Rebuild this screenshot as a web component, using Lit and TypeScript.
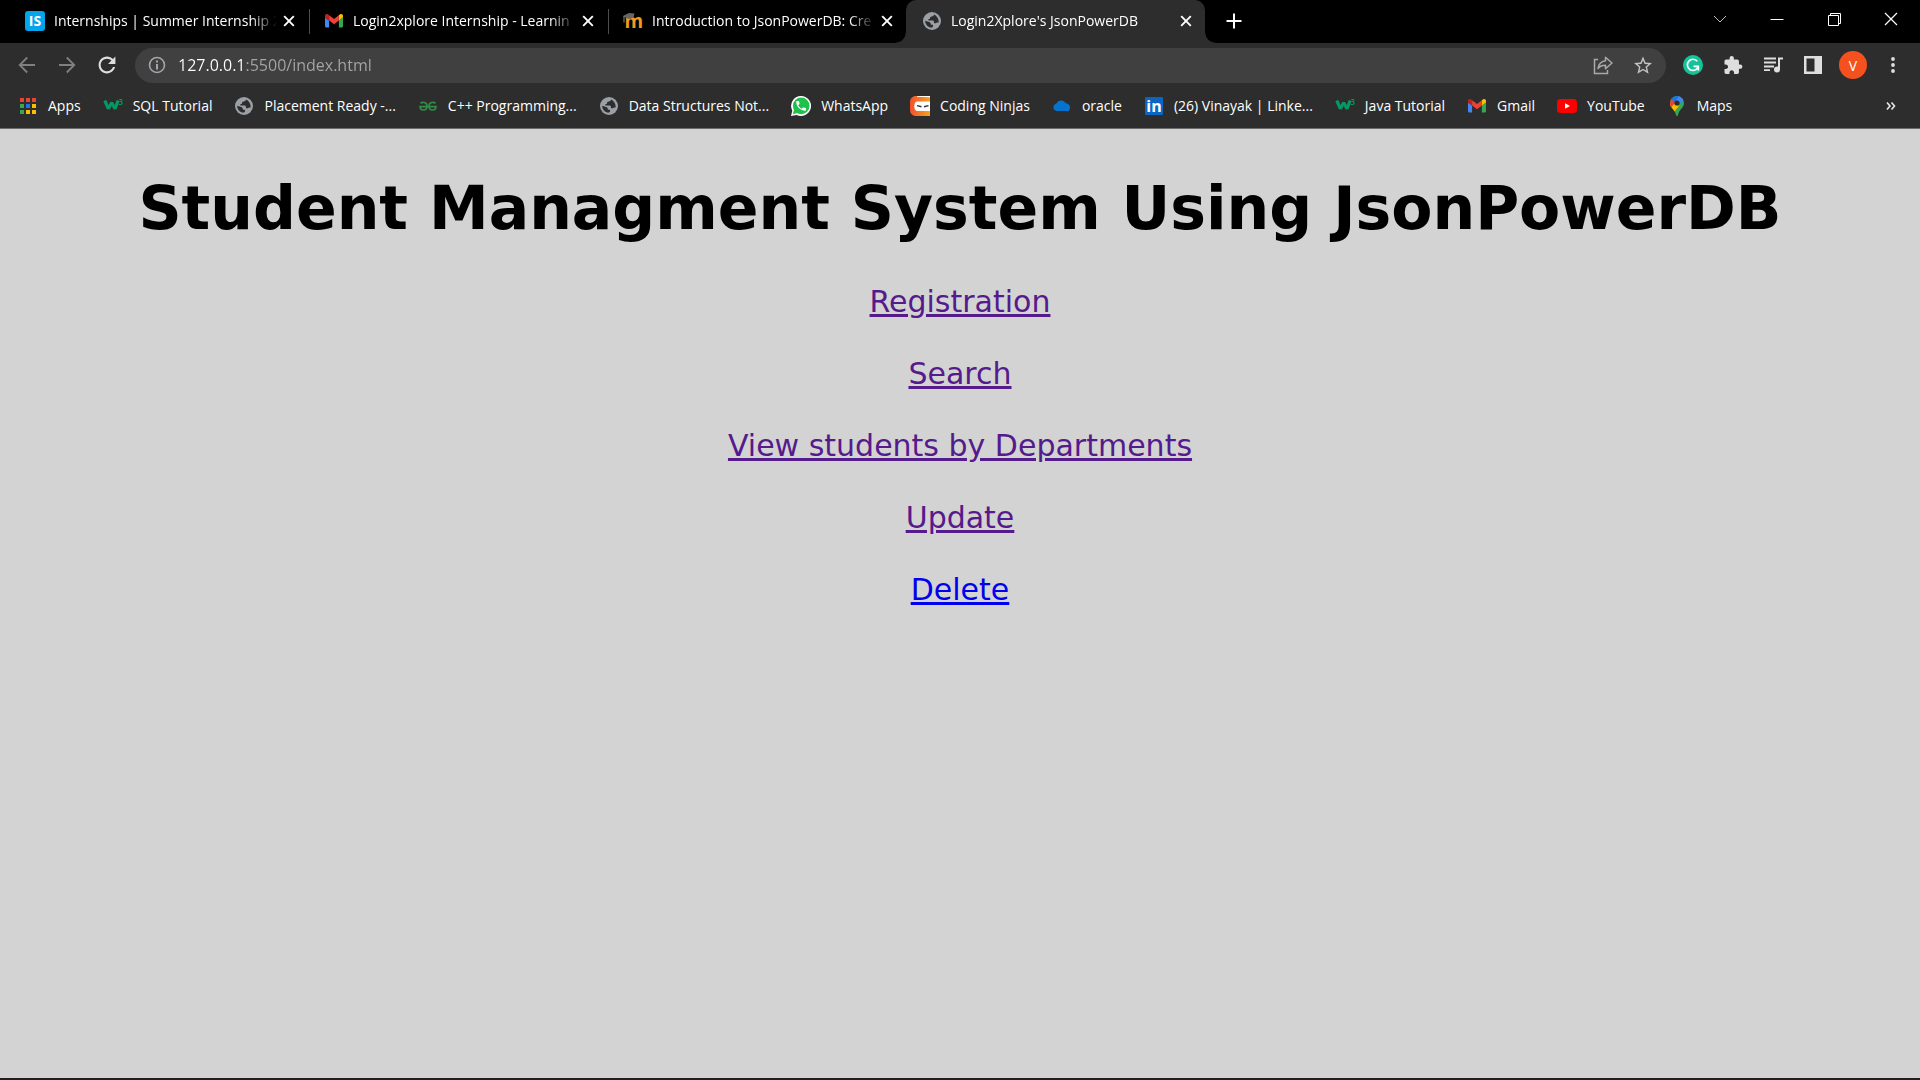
import { LitElement, html, svg, css, SVGTemplateResult } from "lit";
import { customElement, property } from "lit/decorators.js";

const gmail = svg`<g transform="translate(1 3) scale(.2045) translate(-52 -42)">
  <path fill="#4285f4" d="M58 108h14V74L52 59v43c0 3.32 2.69 6 6 6"/>
  <path fill="#34a853" d="M120 108h14c3.32 0 6-2.69 6-6V59l-20 15"/>
  <path fill="#fbbc04" d="M120 48v26l20-15v-8c0-7.42-8.47-11.65-14.4-7.2"/>
  <path fill="#ea4335" d="M72 74V48l24 18 24-18v26L96 92"/>
  <path fill="#c5221f" d="M52 51v8l20 15V48l-5.6-4.2c-5.94-4.45-14.4-.22-14.4 7.2"/></g>`;

const globe = svg`<circle cx="10" cy="10" r="9" fill="#9aa0a6"/>
  <path fill="#2d2d2d" d="M12 3.600c-.2 1.300-1 1.800-2.200 1.900-1.300.1-1.700.6-1.700 1.400 0 .8-.7 1.200-1.700 1.200v1.500h3.800c1.300 0 1.800.6 1.800 1.700v.9h1.500c1 0 1.500-.6 2.400-.6h.8c.3-3.600-1.800-6.700-4.700-8z"/>
  <path fill="#2d2d2d" d="M3.200 9.700l3.900 1.200c1.200.4 1.600 1 1.600 1.800 0 .8.500 1.100 1.400 1.100.8 0 1 .5 1 1.100 0 .8-.6 1.200-1.400 1.300v.5c-3.700-.2-6.600-3.300-6.500-7z"/>`;

const w3 = svg`<polyline points="1.800,4.500 5.300,12.700 8.700,6.800 12,12.700 15.200,4.500" fill="none" stroke="#059862" stroke-width="3.200" stroke-linejoin="bevel"/>
  <text x="15.500" y="9" font-size="8" fill="#059862" font-family="Open Sans" font-weight="600">3</text>`;

const icons: Record<string, SVGTemplateResult> = {
  gmail,
  globe,
  w3,
  is: svg`<rect width="20" height="20" rx="3" fill="#00a5ec"/>
    <text x="10" y="15" text-anchor="middle" font-size="14" font-weight="700" fill="#fff" font-family="Open Sans">IS</text>`,
  moodle: svg`<text x="1.500" y="17" font-size="19" font-weight="700" fill="#f7981d" font-family="Open Sans">m</text>
    <path fill="#666" d="M0 5 6 2l5.500.5-1 4-4 1.500-3-1z"/><path d="M1 5v6.500" stroke="#888" stroke-width="1"/>`,
  apps: svg`<path fill="#ea4335" d="M2 2h4v4H2zM8 2h4v4H8zM14 2h4v4h-4z"/><path fill="#34a853" d="M2 8h4v4H2zM2 14h4v4H2z"/>
    <path fill="#1a73e8" d="M8 8h4v4H8z"/><path fill="#fbbc04" d="M14 8h4v4h-4zM14 14h4v4h-4zM8 14h4v4H8z"/>`,
  gfg: svg`<g fill="none" stroke="#2f8d46" stroke-width="1.700"><path d="M2.500 7.300C4 5.800 9 5.700 9 10.200c0 2.300-1.500 3.800-3.500 3.800S2 12.500 2 10.600h16c0 1.900-1.500 3.400-3.500 3.400S11 12.500 11 10.200c0-4.500 5-4.400 6.500-2.900"/></g>`,
  whatsapp: svg`<path fill="#fff" d="M10 0a10 10 0 1 1-4.500 18.900L0 20l1.300-5.200A10 10 0 0 1 10 0z"/>
    <circle cx="10.200" cy="9.900" r="8.300" fill="#1fc04b"/><path fill="#1fc04b" d="M1.900 18.200l1.200-4.700 3.500 3.500z"/>
    <path fill="#fff" transform="translate(3.600 3.400) scale(.54)" d="M6.620 10.790c1.440 2.830 3.760 5.140 6.590 6.590l2.200-2.200c.27-.27.67-.36 1.020-.24 1.120.37 2.330.57 3.570.57.55 0 1 .45 1 1V20c0 .55-.45 1-1 1-9.390 0-17-7.610-17-17 0-.55.45-1 1-1h3.500c.55 0 1 .45 1 1 0 1.250.2 2.450.57 3.570.11.35.03.74-.25 1.020l-2.200 2.200z"/>`,
  ninjas: svg`<defs><linearGradient id="nj"><stop offset="0" stop-color="#f1502f"/><stop offset="1" stop-color="#f7a11b"/></linearGradient></defs>
    <path fill="url(#nj)" d="M6 0h14v20H6c-3.500 0-6-2.500-6-6V6c0-3.500 2.500-6 6-6z"/><path fill="#fff" d="M7 0h13v1.200L7 .8z"/>
    <path fill="#fff" d="M7.500 5.500H20v9.500H7.500C5.500 15 4.300 13 4.300 10.200S5.500 5.500 7.500 5.500z"/>
    <path d="M7 9.600l4.500 1.200M18.500 9.600L14 10.800" stroke="#333" stroke-width="1.500"/>`,
  oracle: svg`<path fill="#0572ce" d="M4.800 15a3.700 3.700 0 0 1-.5-7.300 5.500 5.500 0 0 1 9.700-.5 4.500 4.500 0 0 1 3 7.500c-.5.200-1 .3-1.600.3z"/>`,
  linkedin: svg`<rect x="1" y="1" width="18" height="18" rx="1" fill="#0a66c2"/>
    <text x="10" y="16" text-anchor="middle" font-size="16" font-weight="700" fill="#fff" font-family="Open Sans">in</text>`,
  youtube: svg`<rect y="3" width="20" height="14" rx="3.500" fill="#f00"/><path fill="#fff" d="M8 7.200v5.600l5-2.800z"/>`,
  maps: svg`<defs><clipPath id="pin"><path d="M10 0a7 7 0 0 1 7 7c0 5-5 6.500-6 12-.2 1.200-1.800 1.200-2 0C8 13.500 3 12 3 7a7 7 0 0 1 7-7z"/></clipPath></defs>
    <g clip-path="url(#pin)"><path fill="#34a853" d="M0 0h20v20H0z"/><path fill="#fbbc04" d="M1 8.500l5-3 6.500 4L6 17z"/><path fill="#ea4335" d="M0 2h4.500L9 6l-5.500 6L0 10z"/>
    <path fill="#1a73e8" d="M3.500 3 10-1l3 1-4.500 6z"/><path fill="#4285f4" d="M12 0l5 3.500-6 6.500-2.500-5z"/></g><circle cx="10" cy="7" r="2.600" fill="#2d2d2d"/>`,
  close: svg`<path d="M5.200 5.200l9.600 9.600M14.800 5.200l-9.600 9.600" stroke="#fff" stroke-width="1.900"/>`,
  plus: svg`<path d="M10 2.500v15M2.500 10h15" stroke="#fff" stroke-width="2"/>`,
  chevron: svg`<path d="M4 7l6 6 6-6" fill="none" stroke="#bbb" stroke-width="1"/>`,
  minimise: svg`<path d="M3.500 10.500h13" stroke="#fff"/>`,
  restore: svg`<path d="M4.500 6.500h10v10h-10zM6.500 6.500v-2h10v10h-2" fill="none" stroke="#fff"/>`,
  shut: svg`<path d="M4 4l12 12M16 4L4 16" stroke="#fff" stroke-width="1.200"/>`,
  back: svg`<path d="M18 10H3M10.200 2.500 2.700 10l7.500 7.500" fill="none" stroke="#808080" stroke-width="1.800"/>`,
  forward: svg`<path d="M2 10h15M9.800 2.500l7.500 7.500-7.500 7.500" fill="none" stroke="#808080" stroke-width="1.800"/>`,
  reload: svg`<path transform="translate(-2.600 -2.600) scale(1.050)" fill="#dedede" d="M17.650 6.350C16.200 4.900 14.210 4 12 4c-4.420 0-7.990 3.580-7.990 8s3.570 8 7.990 8c3.730 0 6.840-2.550 7.730-6h-2.080c-.82 2.330-3.040 4-5.650 4-3.310 0-6-2.690-6-6s2.690-6 6-6c1.660 0 3.140.69 4.220 1.780L13 11h7V4l-2.350 2.350z"/>`,
  info: svg`<circle cx="10" cy="10" r="7.500" fill="none" stroke="#a3a7ab" stroke-width="1.600"/><path d="M10 5.500v2M10 9v5.500" stroke="#a3a7ab" stroke-width="2"/>`,
  share: svg`<path d="M5 4.500H1.500v14h13V15" fill="none" stroke="#a9a9a9" stroke-width="1.500"/>
    <path d="M12.500 2.300 19 8l-6.500 5.700v-3.400c-3.500 0-5.800 1-7.500 3.200.5-4.300 3-7.100 7.500-7.800z" fill="none" stroke="#a9a9a9" stroke-width="1.500" stroke-linejoin="round"/>`,
  star: svg`<path transform="translate(-.8 -.2) scale(.9)" fill="#c2c2c2" d="M22 9.240l-7.190-.62L12 2 9.190 8.630 2 9.240l5.460 4.730L5.820 21 12 17.270 18.180 21l-1.630-7.030L22 9.240zM12 15.400l-3.760 2.270 1-4.280-3.320-2.880 4.380-.38L12 6.100l1.710 4.040 4.380.38-3.320 2.880 1 4.280L12 15.400z"/>`,
  grammarly: svg`<circle cx="10" cy="10" r="10" fill="#15c39a"/>
    <path d="M14.300 6.300A5.600 5.600 0 1 0 15 12.300" fill="none" stroke="#fff" stroke-width="1.700"/><path d="M10.500 11.300h4.800v4.200" fill="none" stroke="#fff" stroke-width="1.700"/>`,
  puzzle: svg`<path transform="translate(-.2 .2) scale(.85)" fill="#dedede" d="M20.500 11H19V7c0-1.100-.9-2-2-2h-4V3.500C13 2.120 11.880 1 10.500 1S8 2.120 8 3.500V5H4c-1.100 0-1.990.9-1.990 2v3.800H3.500c1.490 0 2.700 1.210 2.700 2.700s-1.210 2.700-2.700 2.700H2V20c0 1.100.9 2 2 2h3.800v-1.500c0-1.490 1.210-2.700 2.700-2.700 1.490 0 2.700 1.210 2.700 2.700V22H17c1.100 0 2-.9 2-2v-4h1.500c1.380 0 2.500-1.120 2.500-2.500S21.880 11 20.500 11z"/>`,
  music: svg`<path d="M1 3.500h12M1 7.500h12M1 11.500h10M1 15.200h6" stroke="#dedede" stroke-width="1.800"/>
    <path d="M16 14.500V3.500h4" fill="none" stroke="#dedede" stroke-width="2"/><circle cx="14" cy="14.500" r="3" fill="#dedede"/>`,
  panel: svg`<path fill-rule="evenodd" fill="#dedede" d="M1 1h18v18H1zM3.500 3.500v13h8v-13z"/>`,
  dots: svg`<circle cx="10" cy="4" r="1.900" fill="#dedede"/><circle cx="10" cy="10" r="1.900" fill="#dedede"/><circle cx="10" cy="16" r="1.900" fill="#dedede"/>`,
  more: svg`<path d="M6 6.500 9 10l-3 3.500M10.500 6.500l3 3.500-3 3.500" fill="none" stroke="#e8e8e8" stroke-width="1.600"/>`,
};

const icon = (name: string) =>
  html`<svg class="icon" width="20" height="20" viewBox="0 0 20 20" aria-hidden="true">${icons[name]}</svg>`;

const shared = css`
  :host { box-sizing: border-box; font-family: "Open Sans", "Noto Sans", sans-serif; }
  .icon { display: block; flex: none; }
  button {
    display: flex; align-items: center; justify-content: center;
    padding: 0; border: 0; background: none; color: inherit; font: inherit;
  }
`;

@customElement("tab-strip")
export class TabStrip extends LitElement {
  @property({ attribute: false }) tabs: { icon: string; title: string; active?: boolean }[] = [
    { icon: "is", title: "Internships | Summer Internship 2" },
    { icon: "gmail", title: "Login2xplore Internship - Learnin" },
    { icon: "moodle", title: "Introduction to JsonPowerDB: Cre" },
    { icon: "globe", title: "Login2Xplore's JsonPowerDB", active: true },
  ];

  static styles = [shared, css`
    :host {
      display: flex; height: 43px; padding: 0 1px 0 9px; background: #000; color: #fff; font-size: 14px;
    }
    .tabs { display: flex; flex: 0 1 1196px; min-width: 0; }
    .tab {
      display: flex; flex: 1 1 0; min-width: 0; align-items: center;
      padding: 0 9px 1px 16px; box-sizing: border-box; position: relative;
    }
    .tab.divided::after {
      content: ""; position: absolute; right: -2px; top: 9px; width: 1px; height: 25px; background: #4d4d4d;
    }
    .tab.active { background: #2d2d2d; border-radius: 10px 10px 0 0; }
    .tab.active::before, .tab.active::after {
      content: ""; position: absolute; bottom: 0; width: 10px; height: 10px;
    }
    .tab.active::before { right: 100%; background: radial-gradient(circle at 0 0, #000 9px, #2d2d2d 10px); }
    .tab.active::after { left: 100%; background: radial-gradient(circle at 100% 0, #000 9px, #2d2d2d 10px); }
    .select { flex: 1; min-width: 0; gap: 9px; justify-content: flex-start; line-height: 20px; }
    .title {
      flex: 1; min-width: 0; overflow: hidden; white-space: nowrap; text-align: left;
      mask-image: linear-gradient(to right, #000 calc(100% - 28px), transparent calc(100% - 2px));
    }
    .close { width: 20px; height: 20px; }
    .new { width: 36px; height: 42px; margin-left: 11px; }
    .controls { display: flex; margin-left: auto; height: 37px; }
    .controls button { width: 57px; }
  `];

  render() {
    return html`
      <div class="tabs">
        ${this.tabs.map((t, i) => html`
          <div class="tab ${t.active ? "active" : i < 2 ? "divided" : ""}">
            <button class="select">${icon(t.icon)}<span class="title">${t.title}</span></button>
            <button class="close" aria-label="Close tab">${icon("close")}</button>
          </div>`)}
      </div>
      <button class="new" aria-label="New tab">${icon("plus")}</button>
      <div class="controls">
        <button aria-label="Search tabs">${icon("chevron")}</button>
        <button aria-label="Minimise">${icon("minimise")}</button>
        <button aria-label="Restore">${icon("restore")}</button>
        <button aria-label="Close">${icon("shut")}</button>
      </div>`;
  }
}

@customElement("tool-bar")
export class ToolBar extends LitElement {
  static styles = [shared, css`
    :host {
      display: flex; align-items: center; height: 45px; padding: 0 7px 1px;
      background: #2d2d2d; color: #fff;
    }
    .tool { width: 40px; height: 36px; flex: none; }
    .omnibox {
      display: flex; align-items: center; flex: 1; min-width: 0; height: 35px; margin: 0 7px 0 8px;
      padding: 0 3px 0 12px; border-radius: 18px; background: #404040; box-sizing: border-box;
    }
    .url {
      flex: 1; min-width: 0; margin: 0; padding: 0 0 0 11px; border: 0; outline: 0; height: 24px;
      font: 16px/24px "Open Sans", "Noto Sans", sans-serif; color: transparent;
      background: linear-gradient(to right, #fff 68px, #a6a6a6 68px) content-box;
      -webkit-background-clip: text; background-clip: text;
      background-origin: content-box;
    }
    .avatar {
      display: flex; align-items: center; justify-content: center; width: 28px; height: 28px;
      border-radius: 50%; background: #f4511e; font-size: 14px;
    }
  `];

  tool(name: string, label: string) {
    return html`<button class="tool" aria-label=${label}>${icon(name)}</button>`;
  }

  render() {
    return html`
      ${this.tool("back", "Back")}${this.tool("forward", "Forward")}${this.tool("reload", "Reload")}
      <div class="omnibox">
        ${icon("info")}
        <input class="url" aria-label="Address" spellcheck="false" value="127.0.0.1:5500/index.html" />
        ${this.tool("share", "Share")}${this.tool("star", "Bookmark this page")}
      </div>
      ${this.tool("grammarly", "Grammarly")}${this.tool("puzzle", "Extensions")}
      ${this.tool("music", "Media")}${this.tool("panel", "Side panel")}
      <button class="tool" aria-label="Profile"><span class="avatar">V</span></button>
      ${this.tool("dots", "Menu")}`;
  }
}

@customElement("bookmark-bar")
export class BookmarkBar extends LitElement {
  @property({ attribute: false }) items: [string, string][] = [
    ["apps", "Apps"], ["w3", "SQL Tutorial"], ["globe", "Placement Ready -..."], ["gfg", "C++ Programming..."],
    ["globe", "Data Structures Not..."], ["whatsapp", "WhatsApp"], ["ninjas", "Coding Ninjas"], ["oracle", "oracle"],
    ["linkedin", "(26) Vinayak | Linke..."], ["w3", "Java Tutorial"], ["gmail", "Gmail"], ["youtube", "YouTube"],
    ["maps", "Maps"],
  ];

  static styles = [shared, css`
    :host {
      display: flex; align-items: center; height: 41px; padding: 0 19px 4px 18px; gap: 22px;
      border-bottom: 1px solid #6b6b6b; background: #2d2d2d; font-size: 14px; line-height: 20px;
    }
    .item { display: flex; align-items: center; gap: 10px; color: #fff; text-decoration: none; white-space: nowrap; }
    .more { margin-left: auto; }
  `];

  render() {
    return html`
      ${this.items.map(([name, label]) => html`<a class="item" href="#">${icon(name)}<span>${label}</span></a>`)}
      <button class="more" aria-label="More bookmarks">${icon("more")}</button>`;
  }
}

@customElement("app-root")
export class AppRoot extends LitElement {
  @property({ attribute: false }) links: { label: string; fresh?: boolean }[] = [
    { label: "Registration" }, { label: "Search" }, { label: "View students by Departments" },
    { label: "Update" }, { label: "Delete", fresh: true },
  ];

  static styles = css`
    :host { display: flex; flex-direction: column; min-height: 100vh; }
    .page {
      flex: 1; padding: 43px 8px 40px; border-bottom: 2px solid #231f20; background: #d3d3d3; text-align: center;
      font: 30px/36px Verdana, "DejaVu Sans", sans-serif; color: #000;
    }
    .heading { margin: 0 0 39px; font-size: 60px; line-height: 73px; font-weight: 700; }
    .links { display: flex; flex-direction: column; align-items: center; gap: 36px; }
    .link {
      color: #551a8b; text-decoration: underline; text-decoration-thickness: 3px; text-underline-offset: 2px;
    }
    .link.fresh { color: #0000ee; }
  `;

  render() {
    return html`
      <tab-strip></tab-strip>
      <tool-bar></tool-bar>
      <bookmark-bar></bookmark-bar>
      <main class="page">
        <h1 class="heading">Student Managment System Using JsonPowerDB</h1>
        <nav class="links">
          ${this.links.map((l) => html`<a class="link ${l.fresh ? "fresh" : ""}" href="#">${l.label}</a>`)}
        </nav>
      </main>`;
  }
}
